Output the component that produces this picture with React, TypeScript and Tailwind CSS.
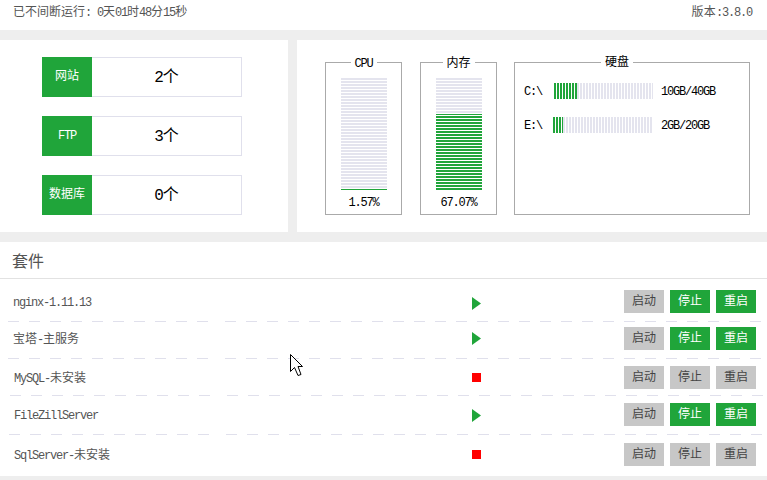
const green = "bg-[repeating-linear-gradient(90deg,#20a53a_0,#20a53a_2px,transparent_2px,transparent_3px)]";
const gray = "bg-[repeating-linear-gradient(90deg,#e4e4ee_0,#e4e4ee_2px,transparent_2px,transparent_3px)]";

// latin text is squeezed to half width so it sits next to CJK like a bitmap font
function Mix({ text }: { text: string }) {
	const parts = text.split(/([\u0000-\u00ff]+)/).filter(Boolean);
	return (
		<>
			{parts.map((part, i) =>
				/^[\u0000-\u00ff]+$/.test(part) ? (
					<span key={i} className="tracking-[-1.2px] whitespace-pre">
						{part}
					</span>
				) : (
					<span key={i}>{part}</span>
				),
			)}
		</>
	);
}

function Stat({ label, value }: { label: string; value: string }) {
	return (
		<div className="flex h-10 w-[200px]">
			<div className="flex w-[50px] items-center justify-center bg-[#20a53a] text-xs text-white">
				<Mix text={label} />
			</div>
			<div className="flex flex-1 items-center justify-center border border-l-0 border-[#e0e0ec] pt-[2px] text-base text-black">
				<Mix text={value} />
			</div>
		</div>
	);
}

function VBar({ title, pct, fill }: { title: string; pct: string; fill: number }) {
	return (
		<div className="relative flex h-[153px] w-[77px] flex-col items-center border border-[#aaaaaa] pt-[15px]">
			<div className="absolute -top-[6px] left-1/2 -translate-x-1/2 bg-white px-[4px] text-xs leading-[14px] text-black">
				<Mix text={title} />
			</div>
			<div className="flex h-[112px] w-[46px] flex-col justify-end bg-[repeating-linear-gradient(180deg,#e4e4ee_0,#e4e4ee_2px,transparent_2px,transparent_3px)]">
				<div
					className="bg-[repeating-linear-gradient(0deg,#20a53a_0,#20a53a_2px,#ffffff_2px,#ffffff_3px)]"
					style={{ height: fill }}
				/>
			</div>
			<div className="mt-[6px] text-xs leading-[14px] text-black">
				<Mix text={pct} />
			</div>
		</div>
	);
}

function Disk({ name, usage, used, labelW, barW }: { name: string; usage: string; used: number; labelW: string; barW: string }) {
	return (
		<div className="flex h-4 items-center text-xs text-black">
			<div className={`${labelW} pt-px`}>
				<Mix text={name} />
			</div>
			<div className={`flex h-4 ${barW}`}>
				<div className={green} style={{ width: used }} />
				<div className={`flex-1 ${gray}`} />
			</div>
			<div className="ml-2 pt-px">
				<Mix text={usage} />
			</div>
		</div>
	);
}

function Btn({ label, on }: { label: string; on?: boolean }) {
	return (
		<div
			className={`flex h-[23px] w-10 items-center justify-center text-xs ${
				on ? "bg-[#20a53a] text-white" : "bg-[#c7c7c7] text-[#444444]"
			}`}
		>
			{label}
		</div>
	);
}

function Sep({ offset }: { offset: string }) {
	const dash = "h-px bg-[repeating-linear-gradient(90deg,#e0e0ec_0,#e0e0ec_11px,transparent_11px,transparent_21px)]";
	return (
		<div className={`flex gap-[17px] pr-1 ${offset}`}>
			<div className={`w-[200px] ${dash}`} />
			<div className={`flex-1 ${dash}`} />
		</div>
	);
}

function Row({
	name,
	running,
	height,
	top,
	nameLeft,
	icon = "",
}: {
	name: string;
	running: boolean;
	height: string;
	top: string;
	nameLeft: string;
	icon?: string;
}) {
	return (
		<div className={`${height} ${top}`}>
			<div className="flex h-[23px] items-center pr-[11px]">
				<div className={`w-[472px] pt-[2px] text-xs text-[#555555] ${nameLeft}`}>
					<Mix text={name} />
				</div>
				{running ? (
					<svg width="9" height="13" viewBox="0 0 9 13" className={`block ${icon}`}>
						<polygon points="0,0 9,6.5 0,13" fill="#20a53a" />
					</svg>
				) : (
					<div className="size-[9px] bg-[#ff0000]" />
				)}
				<div className="ml-auto flex gap-[6px]">
					<Btn label="启动" />
					<Btn label="停止" on={running} />
					<Btn label="重启" on={running} />
				</div>
			</div>
		</div>
	);
}

export default function App() {
	return (
		<div className="relative flex h-[480px] w-[767px] flex-col overflow-hidden bg-[#eeeeee] font-['Liberation_Mono','Noto_Sans_CJK_SC',monospace]">
			<div className="flex h-[30px] items-start justify-between bg-white pl-[13px] pr-[15px] pt-[6px] text-xs leading-[14px] text-[#555555]">
				<div>
					<Mix text="已不间断运行: 0天01时48分15秒" />
				</div>
				<div className="tracking-[0.3px]">
					<Mix text="版本:3.8.0" />
				</div>
			</div>

			<div className="mt-[10px] flex h-[192px] gap-[9px]">
				<div className="flex w-[288px] flex-col gap-[19px] bg-white pl-[42px] pt-[17px]">
					<Stat label="网站" value="2个" />
					<Stat label="FTP" value="3个" />
					<Stat label="数据库" value="0个" />
				</div>
				<div className="flex flex-1 bg-white pl-[28px] pt-[22px]">
					<VBar title="CPU" pct="1.57%" fill={1} />
					<div className="ml-[18px]">
						<VBar title="内存" pct="67.07%" fill={76} />
					</div>
					<div className="relative ml-[17px] flex h-[153px] w-[236px] flex-col gap-[18px] border border-[#aaaaaa] pl-[9px] pt-[20px]">
						<div className="absolute -top-[7px] left-[86px] bg-white px-[4px] text-xs leading-[14px] text-black">硬盘</div>
						<Disk name="C:\" usage="10GB/40GB" used={23} labelW="w-[30px]" barW="w-[99px]" />
						<Disk name="E:\" usage="2GB/20GB" used={10} labelW="w-[29px]" barW="w-[100px]" />
					</div>
				</div>
			</div>

			<div className="mt-[10px] flex h-[234px] flex-col bg-white">
				<div className="flex h-[37px] items-center border-b border-[#e2e2e2] pl-3 pt-[5px] text-base text-[#555555]">套件</div>
				<Row name="nginx-1.11.13" running height="h-[42px]" top="pt-[11px]" nameLeft="pl-[13px]" icon="mt-[4px]" />
				<Sep offset="ml-[8px]" />
				<Row name="宝塔-主服务" running height="h-[36px]" top="pt-[5px]" nameLeft="pl-[13px]" />
				<Sep offset="ml-[8px]" />
				<Row name="MySQL-未安装" running={false} height="h-[36px]" top="pt-[7px]" nameLeft="pl-[14px]" />
				<Sep offset="ml-[10px]" />
				<Row name="FileZillServer" running height="h-[38px]" top="pt-[7px]" nameLeft="pl-[14px]" icon="mt-[2px]" />
				<Sep offset="ml-[9px]" />
				<Row name="SqlServer-未安装" running={false} height="h-[41px]" top="pt-[8px]" nameLeft="pl-[14px]" />
			</div>

			<svg width="14" height="23" viewBox="0 0 14 23" className="absolute left-[290px] top-[354px]">
				<path d="M0.5 0.5 V17.5 L4.5 13.5 L8 21.5 L11 20.5 L8 12.5 H12.5 Z" fill="#ffffff" stroke="#000000" strokeWidth="1" />
			</svg>
		</div>
	);
}
